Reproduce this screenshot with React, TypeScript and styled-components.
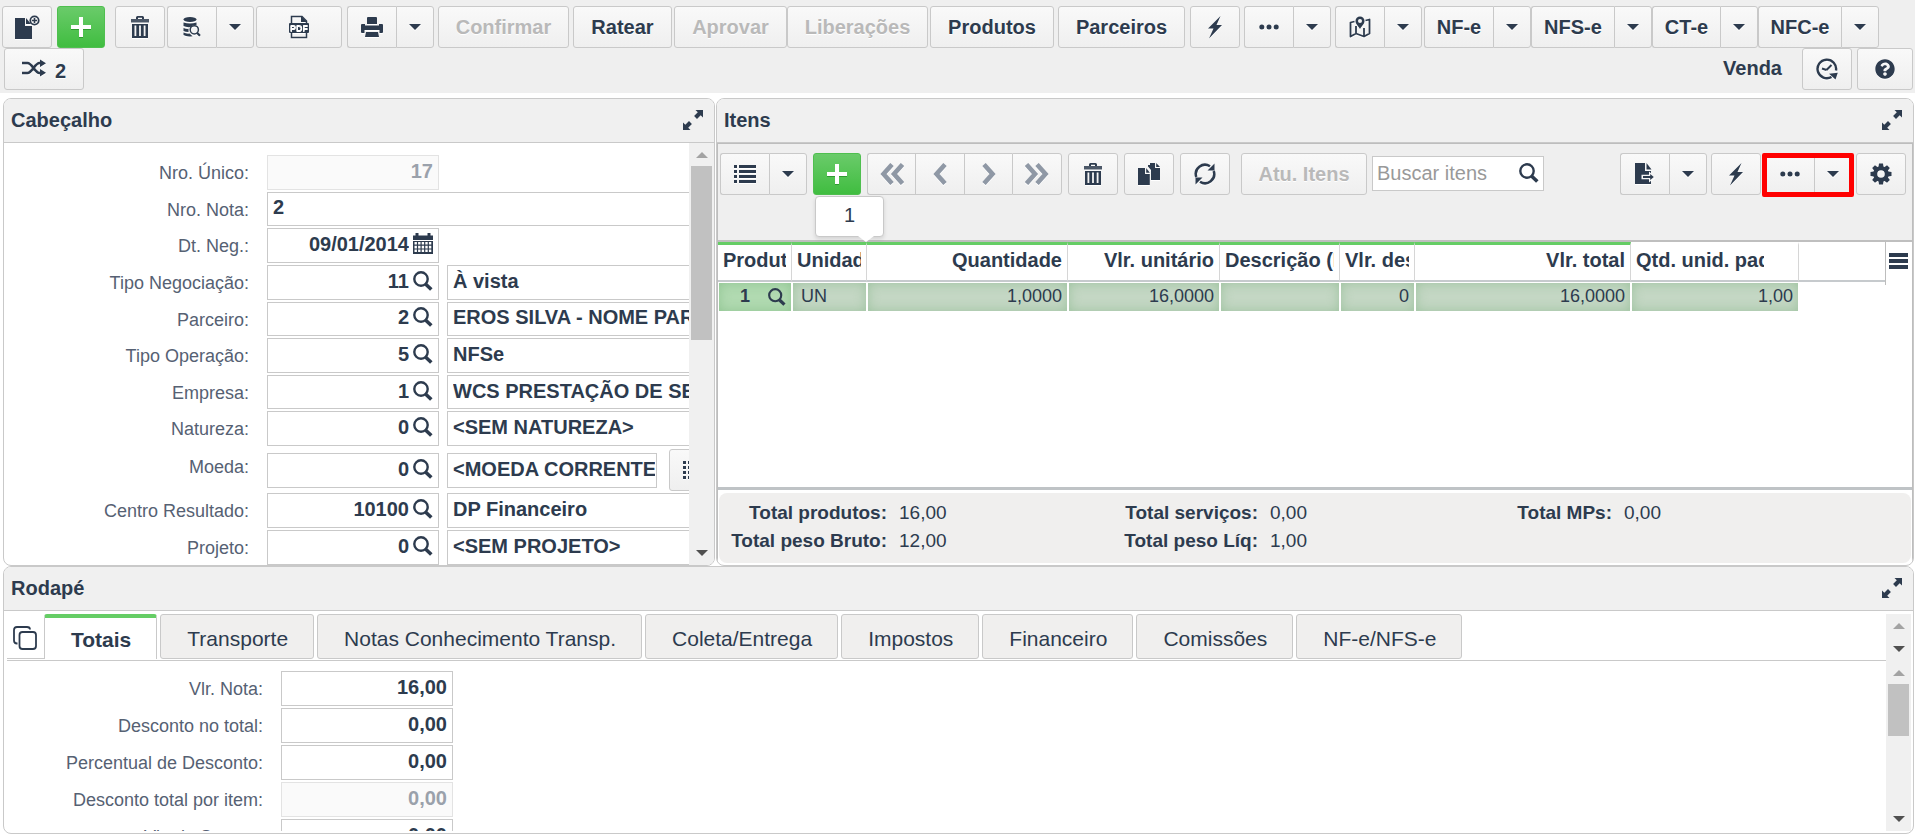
import React from "react";
import styled, { createGlobalStyle, css } from "styled-components";
import { FaQuestionCircle } from "react-icons/fa";

const ink = "#2d3b4e";
const line = "#c9c9c9";
const green = "#65cd65";
const chrome = "#efefef";

const GlobalStyle = createGlobalStyle`
  *, *::before, *::after { box-sizing: border-box; }
  body {
    margin: 0;
    background: #fff;
    color: ${ink};
    font-family: "Liberation Sans", Arial, sans-serif;
    font-size: 20px;
  }
  button, input { font-family: inherit; color: inherit; }
  svg { display: block; flex: none; }
`;

/* ---------- icons ---------- */

type SvgProps = { w: number; h: number; children: React.ReactNode };
const Svg = ({ w, h, children }: SvgProps) => (
  <svg width={w} height={h} viewBox={`0 0 ${w} ${h}`} fill="currentColor" aria-hidden="true">
    {children}
  </svg>
);

const NewDocIcon = () => (
  <Svg w={26} h={26}>
    <path d="M1 4h10v8h7v13H1z" />
    <path d="M12 4l5 6h-5z" />
    <circle cx="20.500" cy="6.500" r="4.200" fill="none" stroke="currentColor" strokeWidth="1.800" />
    <path d="M19.700 4h1.600v1.700H23v1.600h-1.700V9h-1.600V7.300H18V5.700h1.700z" />
  </Svg>
);
const PlusIcon = () => (
  <Svg w={20} h={22}>
    <path d="M8 1h4v8h8v4h-8v8H8v-8H0V9h8z" />
  </Svg>
);
const TrashIcon = () => (
  <Svg w={18} h={24}>
    <path d="M5 4V2.500Q5 1 6.500 1h5Q13 1 13 2.500V4h-2V2.800H7V4z" />
    <path d="M0 4h18v3.500H0z" opacity=".85" />
    <path fillRule="evenodd" d="M1 9h16v14H1zM3.500 10.500v10.500h1.800V10.500zM8.100 10.500v10.500h1.800V10.500zM12.700 10.500v10.500h1.800V10.500z" />
  </Svg>
);
const DbSearchIcon = () => (
  <Svg w={18} h={20}>
    <ellipse cx="7" cy="2.500" rx="6.500" ry="2.500" />
    <path d="M.500 5.500q6.500 2 13 0v2.500h-3l-3 2q-4 .5-7-1z" />
    <path d="M.500 11q3 1.200 5 .8v3.200q-3 0-5-1z" />
    <path d="M.500 15.500q3 1.500 6 1l3 2.700q-6 .8-9-1.200z" />
    <circle cx="11.300" cy="12.800" r="4.100" fill="none" stroke="currentColor" strokeWidth="1.500" />
    <path d="M14 15.800l3 3" stroke="currentColor" strokeWidth="2.200" />
  </Svg>
);
const PdfIcon = () => (
  <Svg w={20} h={24}>
    <path d="M2.500 8V1.500H13L17.500 6v2M2.500 17v5.500h15V17" fill="none" stroke="currentColor" strokeWidth="1.500" />
    <path d="M12 1l6 6h-6z" />
    <rect x="0" y="8" width="20" height="10" rx="1" />
    <text x="10" y="16" fontSize="9" fontWeight="700" fill="#fff" textAnchor="middle">PDF</text>
  </Svg>
);
const PrinterIcon = () => (
  <Svg w={22} h={22}>
    <path d="M6 8V2q0-1 1-1h8q1 0 1 1v6z" />
    <path d="M0 9q0-1 1-1h3v1.500h14V8h3q1 0 1 1v7q0 1-1 1h-2.500v-3h-15v3H1q-1 0-1-1z" />
    <path d="M5 16h12l1 5H4z" />
  </Svg>
);
const BoltIcon = () => (
  <Svg w={16} h={24}>
    <path d="M13.500 1L1 13.500h5.500L2 23.500 15 10H9.500z" />
  </Svg>
);
const DotsIcon = () => (
  <Svg w={20} h={6}>
    <circle cx="2.800" cy="3" r="2.500" />
    <circle cx="10" cy="3" r="2.500" />
    <circle cx="17.200" cy="3" r="2.500" />
  </Svg>
);
const MapIcon = () => (
  <Svg w={22} h={22}>
    <path
      d="M5.500 5.500L1.500 6.500V20.500L7 17.500L15 20.500L20.500 17.500V3.500L16.500 4.500M7 17.500V10M15 20.500V12"
      fill="none"
      stroke="currentColor"
      strokeWidth="1.800"
      strokeLinejoin="round"
    />
    <path fillRule="evenodd" d="M11 0.500a4.500 4.500 0 0 1 4.500 4.500c0 3-2.500 4.500-4.500 8-2-3.500-4.500-5-4.500-8A4.500 4.500 0 0 1 11 .500zM11 3a2 2 0 1 0 0 4 2 2 0 0 0 0-4z" />
  </Svg>
);
const ShuffleIcon = () => (
  <Svg w={24} h={18}>
    <path d="M0 4h5.500C10 4 13 14 17.500 14H19M0 14h5.500C10 14 13 4 17.500 4H19" fill="none" stroke="currentColor" strokeWidth="2.600" />
    <path d="M18 .500L24 4.200 18 8zM18 10l6 3.800-6 3.700z" />
  </Svg>
);
const ClockIcon = () => (
  <Svg w={22} h={22}>
    <path d="M20 12.500A9.300 9.300 0 1 0 15.500 19" fill="none" stroke="currentColor" strokeWidth="2.400" />
    <path d="M13 15.800L21.800 14.800L19.500 21.500z" />
    <path d="M15.500 7L10.500 12M6 10.500l4.500 1.500" stroke="currentColor" strokeWidth="2" />
  </Svg>
);
const ExpandIcon = () => (
  <Svg w={20} h={20}>
    <path d="M11 0.500h8.500V9L16.700 6.200 13 9.900 10.100 7 13.800 3.300z" transform="translate(1 -1)" />
    <path d="M9 19.500H.500V11L3.300 13.800 7 10.100 9.900 13 6.200 16.700z" transform="translate(-1 1)" />
  </Svg>
);
const ListIcon = () => (
  <Svg w={22} h={20}>
    {[1, 6, 11, 16].map((y) => (
      <path key={y} d={`M0 ${y}h3v3H0zM5 ${y}h17v3H5z`} />
    ))}
  </Svg>
);
const ChevronIcon = ({ right, double }: { right?: boolean; double?: boolean }) => (
  <Svg w={double ? 24 : 14} h={22}>
    <g
      fill="none"
      stroke="#8f98a5"
      strokeWidth="4.600"
      transform={right ? `matrix(-1 0 0 1 ${double ? 24 : 14} 0)` : undefined}
    >
      <path d="M12 1.500L3.500 11l8.500 9.500" />
      {double && <path d="M22.500 1.500L14 11l8.500 9.500" />}
    </g>
  </Svg>
);
const CopyIcon = () => (
  <Svg w={22} h={24}>
    <path d="M12 1h5v5h5v12h-9V8l-3-3.500V3h2z" />
    <path d="M18.200 1l3.800 4h-3.800z" />
    <path d="M0 6h7v6h4.800v11H0z" />
    <path d="M8.200 6l3.600 4.800H8.200z" />
  </Svg>
);
const RefreshIcon = () => (
  <Svg w={22} h={24}>
    <path d="M2.300 15A9.200 9.200 0 0 1 16 4.300M19.700 9A9.200 9.200 0 0 1 6 19.700" fill="none" stroke="currentColor" strokeWidth="2.500" />
    <path d="M20.500 1.500V8.500H13.500zM1.500 22.500V15.500H8.500z" />
  </Svg>
);
const ExportIcon = () => (
  <Svg w={22} h={22}>
    <path d="M1 0h10v8h6v13H1z" />
    <path d="M12.500 0L17.500 6.500h-5z" />
    <path d="M7.500 11.700h7.500V8.500l6.500 5.500-6.500 5.500v-3.200H7.500z" fill="#f5f5f5" />
    <path d="M9 13h7.200v-2l3.600 3-3.600 3v-2H9z" />
  </Svg>
);
const GearIcon = () => (
  <Svg w={22} h={22}>
    {[0, 45, 90, 135].map((a) => (
      <path key={a} d="M9 .500h4l.700 5H8.300zM9 21.500h4l.700-5H8.300z" transform={`rotate(${a} 11 11)`} />
    ))}
    <circle cx="11" cy="11" r="5.800" fill="none" stroke="currentColor" strokeWidth="4" />
  </Svg>
);
const CalendarIcon = () => (
  <Svg w={20} h={22}>
    <path d="M2.500 0h3v2.500h9V0h3v2.500H20V7H0V2.500h2.500z" />
    <path fillRule="evenodd" d="M0 8h20v13H0zM1.500 9v2.600h2.400V9zM5.100 9v2.600h2.400V9zM8.700 9v2.600h2.400V9zM12.300 9v2.600h2.400V9zM15.900 9v2.600h2.400V9zM1.500 12.800v2.600h2.400v-2.600zM5.100 12.800v2.600h2.400v-2.600zM8.700 12.800v2.600h2.400v-2.600zM12.300 12.800v2.600h2.400v-2.600zM15.900 12.800v2.600h2.400v-2.600zM1.500 16.600v2.400h2.400v-2.400zM5.100 16.600v2.400h2.400v-2.400zM8.700 16.600v2.400h2.400v-2.400zM12.300 16.600v2.400h2.400v-2.400zM15.900 16.600v2.400h2.400v-2.400z" />
  </Svg>
);
const SearchIcon = ({ size = 20 }: { size?: number }) => (
  <svg width={size} height={size} viewBox="0 0 20 20" fill="none" stroke="currentColor" aria-hidden="true">
    <circle cx="8" cy="8" r="6.700" strokeWidth="2.400" />
    <path d="M12.800 13.300l5.500 5.200" strokeWidth="3.600" />
  </svg>
);
const MenuIcon = () => (
  <Svg w={19} h={16}>
    <path d="M0 0h19v4H0zM0 6h19v4H0zM0 12h19v4H0z" />
  </Svg>
);
const TabsIcon = () => (
  <Svg w={24} h={24}>
    <g fill="none" stroke="currentColor" strokeWidth="1.800">
      <path d="M4.500 17.500H4Q1 17.500 1 14.500V4Q1 1 4 1h10q3 0 3 2.500" />
      <rect x="6.500" y="6" width="16.500" height="17" rx="3" />
    </g>
  </Svg>
);
const CaretIcon = () => (
  <Svg w={12} h={6}>
    <path d="M0 0h12L6 6z" />
  </Svg>
);

/* ---------- buttons ---------- */

const face = css`
  height: 42px;
  border: 1px solid ${line};
  background: linear-gradient(#f9f9f9, #efefef);
  display: inline-flex;
  align-items: center;
  justify-content: center;
  padding: 0;
  flex: none;
  svg { filter: drop-shadow(0 1px 0 #fff); }
`;

const Button = styled.button<{ $w?: number; $gap?: number }>`
  ${face}
  width: ${(p) => p.$w ?? 50}px;
  margin-left: ${(p) => p.$gap ?? 0}px;
  border-radius: 3px;
  font-size: 20px;
  font-weight: 700;
  line-height: 36px;
  text-shadow: 0 1px 0 #fff;
  &:disabled { color: #b9b9b9; }
`;

const AddButton = styled(Button)`
  border-color: #4fbf4f;
  background: linear-gradient(#6acb6a, #40bd40);
  color: #fff;
  svg { filter: drop-shadow(0 1px 0 #2f9a2f); }
`;

const CountButton = styled(Button)`
  align-items: flex-start;
  gap: 9px;
  padding-top: 4px;
  svg { margin-top: 6px; }
`;

const Split = styled.div<{ $gap?: number }>`
  position: relative;
  display: flex;
  flex: none;
  margin-left: ${(p) => p.$gap ?? 0}px;
  & > button { margin-left: 0; }
  & > button:not(:last-of-type) { border-radius: 3px 0 0 3px; border-right: 0; }
  & > button:last-of-type { border-radius: 0 3px 3px 0; }
  & > button:not(:first-of-type):not(:last-of-type) { border-radius: 0; }
`;

type SplitButtonProps = { label: string; w?: number; gap?: number; children: React.ReactNode; mark?: React.ReactNode };
const SplitButton = ({ label, w = 49, gap, children, mark }: SplitButtonProps) => (
  <Split $gap={gap}>
    <Button $w={w} aria-label={label}>{children}</Button>
    <Button $w={38} aria-label={`${label}: opções`}><CaretIcon /></Button>
    {mark}
  </Split>
);

const Highlight = styled.span`
  position: absolute;
  inset: 0 -2px -2px -3px;
  border: 5px solid #f00;
  border-radius: 2px;
  pointer-events: none;
`;

/* ---------- page frame ---------- */

const Page = styled.div`
  height: 100vh;
  display: flex;
  flex-direction: column;
`;

const TopBar = styled.header`
  background: ${chrome};
  padding: 6px 2px 3px;
`;

const BarRow = styled.div`
  display: flex;
  align-items: center;
`;

const Push = styled.span`
  margin-left: auto;
`;

const Operation = styled.strong`
  margin-left: auto;
  padding-bottom: 2px;
`;

const Panels = styled.main`
  flex: 1;
  min-height: 0;
  display: flex;
  flex-direction: column;
  padding: 5px 1px 1px 3px;
`;

const UpperRow = styled.div`
  display: grid;
  grid-template-columns: 712fr 1198fr;
  column-gap: 1px;
`;

const Panel = styled.section<{ $fill?: boolean }>`
  border: 1px solid ${line};
  border-radius: 8px;
  overflow: hidden;
  display: flex;
  flex-direction: column;
  min-width: 0;
  min-height: 0;
  ${(p) => p.$fill && "flex: 1;"}
`;

const PanelHead = styled.div`
  flex: none;
  height: 44px;
  background: #f0f0f0;
  border-bottom: 1px solid ${line};
  display: flex;
  align-items: center;
  justify-content: space-between;
  padding: 0 11px 2px 7px;
`;

const PanelTitle = styled.h2`
  margin: 0;
  font-size: 20px;
  line-height: 24px;
`;

const BareButton = styled.button`
  border: 0;
  background: none;
  padding: 0;
  display: flex;
  flex: none;
`;

const Head = ({ title }: { title: string }) => (
  <PanelHead>
    <PanelTitle>{title}</PanelTitle>
    <BareButton aria-label={`Expandir ${title}`}><ExpandIcon /></BareButton>
  </PanelHead>
);

/* ---------- scroll bars ---------- */

const Track = styled.div<{ $h?: number }>`
  flex: none;
  width: 25px;
  ${(p) => p.$h && `height: ${p.$h}px;`}
  padding-bottom: 1px;
  background: #f0f0f0;
  display: flex;
  flex-direction: column;
  align-items: center;
  justify-content: space-between;
`;

const ArrowCell = styled.div<{ $dim?: boolean; $down?: boolean }>`
  height: 23px;
  width: 100%;
  display: flex;
  align-items: center;
  justify-content: center;
  color: ${(p) => (p.$dim ? "#a3a3a3" : "#505050")};
  svg { transform: ${(p) => (p.$down ? "none" : "scaleY(-1)")}; }
`;

const Thumb = styled.div<{ $h: number }>`
  width: 21px;
  height: ${(p) => p.$h}px;
  margin-bottom: auto;
  background: #c1c1c1;
`;

const ScrollBar = ({ thumb, height }: { thumb?: number; height?: number }) => (
  <Track $h={height} aria-hidden="true">
    <ArrowCell $dim><CaretIcon /></ArrowCell>
    {thumb && <Thumb $h={thumb} />}
    <ArrowCell $down><CaretIcon /></ArrowCell>
  </Track>
);

/* ---------- form fields ---------- */

const HeaderBody = styled.div`
  display: flex;
`;

const FormArea = styled.div`
  flex: 1;
  min-width: 0;
  overflow: hidden;
  padding: 12px 0 0;
`;

const EvenRows = styled.div`
  height: 291px;
  display: grid;
  grid-auto-rows: 1fr;
  row-gap: 2px;
`;

const LowerRows = styled.div`
  display: grid;
  grid-auto-rows: minmax(35px, auto);
  row-gap: 2px;
  margin-top: 3px;
`;

const FieldRow = styled.div<{ $labelWidth: number }>`
  display: grid;
  grid-template-columns: ${(p) => p.$labelWidth}px max-content;
  column-gap: 18px;
  align-items: center;
`;

const FieldLabel = styled.label`
  align-self: start;
  text-align: right;
  font-size: 18px;
  line-height: 37px;
  height: 34px;
  color: #566173;
`;

const Controls = styled.div`
  display: flex;
  align-items: center;
  gap: 8px;
  height: 100%;
`;

const Box = styled.div<{ $w: number; $off?: boolean }>`
  width: ${(p) => p.$w}px;
  height: 100%;
  min-height: 35px;
  max-height: 35px;
  flex: none;
  display: flex;
  align-items: center;
  border: 1px solid ${(p) => (p.$off ? "#e3e3e3" : line)};
  background: ${(p) => (p.$off ? "#fafafa" : "#fff")};
  color: ${(p) => (p.$off ? "#9aa1ab" : ink)};
  padding: 0 5px 3px;
`;

const FormBox = styled(Box)`
  min-height: 0;
`;

const NameBox = styled(FormBox)`
  padding-right: 1px;
`;

const Entry = styled.input<{ $left?: boolean }>`
  flex: 1;
  min-width: 0;
  width: 100%;
  border: 0;
  padding: 0;
  background: none;
  outline: 0;
  color: inherit;
  font-size: 20px;
  font-weight: 700;
  line-height: 24px;
  text-align: ${(p) => (p.$left ? "left" : "right")};
`;

const Lookup = styled(BareButton)`
  margin-left: 4px;
  color: ${ink};
`;

type Field = { id: string; label: string; value: string; name?: string; date?: boolean; off?: boolean; wide?: boolean; narrow?: boolean };

const firstFields: Field[] = [
  { id: "nro-unico", label: "Nro. Único:", value: "17", off: true },
  { id: "nro-nota", label: "Nro. Nota:", value: "2", wide: true },
  { id: "dt-neg", label: "Dt. Neg.:", value: "09/01/2014", date: true },
  { id: "tipo-negociacao", label: "Tipo Negociação:", value: "11", name: "À vista" },
  { id: "parceiro", label: "Parceiro:", value: "2", name: "EROS SILVA - NOME PARCEIRO" },
  { id: "tipo-operacao", label: "Tipo Operação:", value: "5", name: "NFSe" },
  { id: "empresa", label: "Empresa:", value: "1", name: "WCS PRESTAÇÃO DE SERVIÇOS" },
  { id: "natureza", label: "Natureza:", value: "0", name: "<SEM NATUREZA>" },
];

const lastFields: Field[] = [
  { id: "moeda", label: "Moeda:", value: "0", name: "<MOEDA CORRENTE>", narrow: true },
  { id: "centro", label: "Centro Resultado:", value: "10100", name: "DP Financeiro" },
  { id: "projeto", label: "Projeto:", value: "0", name: "<SEM PROJETO>" },
];

const FormField = ({ f }: { f: Field }) => (
  <FieldRow $labelWidth={245}>
    <FieldLabel htmlFor={f.id}>{f.label}</FieldLabel>
    <Controls>
      <FormBox $w={f.wide ? 460 : 172} $off={f.off}>
        <Entry id={f.id} defaultValue={f.value} disabled={f.off} $left={f.wide} />
        {f.date && <Lookup aria-label="Abrir calendário"><CalendarIcon /></Lookup>}
        {f.name && <Lookup aria-label={`Pesquisar ${f.label}`}><SearchIcon /></Lookup>}
      </FormBox>
      {f.name && (
        <NameBox $w={f.narrow ? 210 : 300}>
          <Entry $left defaultValue={f.name} aria-label={`Descrição ${f.label}`} />
        </NameBox>
      )}
      {f.narrow && <Button $gap={4} aria-label="Cotações"><ListIcon /></Button>}
    </Controls>
  </FieldRow>
);

/* ---------- items ---------- */

const ItemsBody = styled.div`
  flex: 1;
  display: flex;
  flex-direction: column;
  border: 1px solid #bdbdbd;
  border-bottom: 0;
  min-width: 0;
`;

const ItemsBar = styled.div`
  position: relative;
  flex: none;
  display: flex;
  align-items: flex-start;
  height: 98px;
  padding: 9px 6px 0 2px;
  background: ${chrome};
  border-bottom: 2px solid #bfbfbf;
`;

const SearchBox = styled(Box)`
  margin: 3px 0 0 5px;
  padding: 0 4px 2px;
`;

const SearchEntry = styled(Entry)`
  font-weight: 400;
  &::placeholder { color: #999; opacity: 1; }
`;

const Tip = styled.output`
  position: absolute;
  left: 97px;
  top: 52px;
  width: 69px;
  height: 41px;
  border: 1px solid ${line};
  border-radius: 4px;
  background: #fff;
  box-shadow: 0 2px 4px rgba(0, 0, 0, 0.12);
  text-align: center;
  line-height: 37px;
  &::after {
    content: "";
    position: absolute;
    left: 42px;
    top: 39px;
    border: 8px solid transparent;
    border-top: 6px solid #fff;
    border-bottom: 0;
  }
`;

const GridFrame = styled.div`
  flex: 1;
  display: flex;
  align-items: flex-start;
  background: #fff;
`;

const Table = styled.table`
  flex: 1;
  width: 100%;
  min-width: 0;
  table-layout: fixed;
  border-collapse: separate;
  border-spacing: 0;
`;

const Th = styled.th<{ $right?: boolean; $mark?: boolean }>`
  height: 40px;
  padding: 0 5px 6px;
  border-top: 3px solid ${(p) => (p.$mark ? green : "transparent")};
  border-right: 1px solid #d6d6d6;
  border-bottom: 2px solid #c6cacd;
  font-size: 20px;
  line-height: 24px;
  text-align: ${(p) => (p.$right ? "right" : "left")};
  &:last-child { border-right: 0; }
`;

const Clip = styled.div`
  overflow: hidden;
  white-space: nowrap;
`;

const Td = styled.td<{ $right?: boolean; $lead?: boolean }>`
  height: 29px;
  padding: 0 5px 1px 8px;
  border: 1px solid #fff;
  border-bottom: 0;
  font-size: 18px;
  text-align: ${(p) => (p.$right ? "right" : "left")};
  background: ${(p) => (p.$lead ? "#b1dab1" : "#c4d7c4")};
  background-clip: padding-box;
  box-shadow: inset 0 0 12px rgba(70, 150, 75, 0.3);
  &:empty:last-child { background: none; box-shadow: none; }
`;

const LeadCell = styled.div`
  display: flex;
  align-items: center;
  justify-content: flex-end;
  gap: 18px;
  font-weight: 700;
`;

const GridMenu = styled(BareButton)`
  width: 27px;
  height: 43px;
  border-left: 1px solid #bdbdbd;
  padding: 11px 0 0 3px;
`;

const columns = [
  { title: "Produto", w: 74, mark: true, value: "1" },
  { title: "Unidade", w: 75, mark: true, value: "UN" },
  { title: "Quantidade", w: 201, right: true, mark: true, value: "1,0000" },
  { title: "Vlr. unitário", w: 152, right: true, mark: true, value: "16,0000" },
  { title: "Descrição (Item)", w: 120, mark: true, value: "" },
  { title: "Vlr. desconto", w: 75, mark: true, value: "0", rightValue: true },
  { title: "Vlr. total", w: 216, right: true, mark: true, value: "16,0000" },
  { title: "Qtd. unid. padrão", w: 168, value: "1,00", rightValue: true, gutter: true },
];

const GutterClip = styled(Clip)`
  margin-right: 29px;
`;

const Totals = styled.dl`
  flex: none;
  margin: 3px 1px 2px;
  height: 70px;
  border-radius: 8px;
  background: #f0efee;
  display: grid;
  grid-template-columns: 168px 179px 192px 179px 175px 1fr;
  grid-auto-rows: 28px;
  column-gap: 0;
  padding-top: 6px;
  font-size: 19px;
  line-height: 28px;
`;

const TotalLabel = styled.dt`
  text-align: right;
  font-weight: 700;
`;

const TotalValue = styled.dd`
  margin: 0;
  padding-left: 12px;
`;

const totals = [
  ["Total produtos:", "16,00"],
  ["Total serviços:", "0,00"],
  ["Total MPs:", "0,00"],
  ["Total peso Bruto:", "12,00"],
  ["Total peso Líq:", "1,00"],
];

const GridRule = styled.div`
  flex: none;
  height: 3px;
  background: #bfc3c6;
`;

/* ---------- footer panel ---------- */

const FooterBody = styled.div`
  flex: 1;
  min-height: 0;
  display: flex;
  flex-direction: column;
  padding: 3px 2px 2px 3px;
`;

const TabStrip = styled.div`
  flex: none;
  display: flex;
`;

const TabList = styled.div`
  flex: 1;
  display: flex;
  gap: 3px;
  height: 47px;
  border-bottom: 1px solid ${line};
`;

const TabCorner = styled.div`
  width: 38px;
  height: 45px;
  margin-right: -4px;
  padding: 12px 0 0 6px;
  border-bottom: 1px solid ${line};
`;

const Tab = styled.button<{ $active?: boolean }>`
  height: 45px;
  flex: none;
  padding: 4px 25px 0 26px;
  border: 1px solid ${line};
  border-radius: 3px;
  background: #f0efee;
  font-size: 21px;
  line-height: 38px;
  ${(p) =>
    p.$active &&
    css`
      background: #fff;
      border-top: 4px solid ${green};
      border-bottom: 0;
      border-radius: 3px 3px 0 0;
      font-weight: 700;
      padding-top: 2px;
    `}
`;

const tabs = ["Totais", "Transporte", "Notas Conhecimento Transp.", "Coleta/Entrega", "Impostos", "Financeiro", "Comissões", "NF-e/NFS-e"];

const TabBody = styled.div`
  flex: 1;
  min-height: 0;
  display: flex;
`;

const TotalsForm = styled.div`
  flex: 1;
  overflow: hidden;
  display: flex;
  flex-direction: column;
  gap: 2px;
  padding-top: 10px;
`;

const footerFields = [
  { id: "vlr-nota", label: "Vlr. Nota:", value: "16,00" },
  { id: "desc-total", label: "Desconto no total:", value: "0,00" },
  { id: "perc-desc", label: "Percentual de Desconto:", value: "0,00" },
  { id: "desc-item", label: "Desconto total por item:", value: "0,00", off: true },
  { id: "vlr-seguro", label: "Vlr. do Seguro:", value: "0,00" },
];

export default function App() {
  return (
    <Page>
      <GlobalStyle />
      <TopBar>
        <BarRow>
          <Button aria-label="Novo documento"><NewDocIcon /></Button>
          <AddButton $w={48} $gap={5} aria-label="Adicionar"><PlusIcon /></AddButton>
          <Button $gap={10} aria-label="Excluir"><TrashIcon /></Button>
          <SplitButton label="Consultar" gap={2}><DbSearchIcon /></SplitButton>
          <Button $w={86} $gap={2} aria-label="Gerar documento"><PdfIcon /></Button>
          <SplitButton label="Imprimir" gap={5}><PrinterIcon /></SplitButton>
          <Button $w={131} $gap={4} disabled>Confirmar</Button>
          <Button $w={99} $gap={4}>Ratear</Button>
          <Button $w={113} $gap={2} disabled>Aprovar</Button>
          <Button $w={141} disabled>Liberações</Button>
          <Button $w={124} $gap={2}>Produtos</Button>
          <Button $w={127} $gap={4}>Parceiros</Button>
          <Button $gap={5} aria-label="Ações rápidas"><BoltIcon /></Button>
          <SplitButton label="Mais" gap={4}><DotsIcon /></SplitButton>
          <SplitButton label="Mapa" gap={4}><MapIcon /></SplitButton>
          <SplitButton label="NF-e" gap={2} w={69}>NF-e</SplitButton>
          <SplitButton label="NFS-e" w={83}>NFS-e</SplitButton>
          <SplitButton label="CT-e" w={68}>CT-e</SplitButton>
          <SplitButton label="NFC-e" w={83}>NFC-e</SplitButton>
        </BarRow>
        <BarRow>
          <CountButton $w={80} $gap={2}>
            <ShuffleIcon />
            <span>2</span>
          </CountButton>
          <Operation>Venda</Operation>
          <Button $gap={20} aria-label="Histórico"><ClockIcon /></Button>
          <Button $w={56} $gap={5} aria-label="Ajuda"><FaQuestionCircle size={20} /></Button>
        </BarRow>
      </TopBar>

      <Panels>
        <UpperRow>
          <Panel>
            <Head title="Cabeçalho" />
            <HeaderBody>
              <FormArea>
                <EvenRows>
                  {firstFields.map((f) => <FormField key={f.id} f={f} />)}
                </EvenRows>
                <LowerRows>
                  {lastFields.map((f) => <FormField key={f.id} f={f} />)}
                </LowerRows>
              </FormArea>
              <ScrollBar thumb={174} />
            </HeaderBody>
          </Panel>

          <Panel>
            <Head title="Itens" />
            <ItemsBody>
              <ItemsBar>
                <SplitButton label="Modo de exibição"><ListIcon /></SplitButton>
                <AddButton $w={48} $gap={6} aria-label="Adicionar item"><PlusIcon /></AddButton>
                <Split $gap={6}>
                  <Button $w={48} aria-label="Primeiro"><ChevronIcon double /></Button>
                  <Button $w={49} aria-label="Anterior"><ChevronIcon /></Button>
                  <Button $w={48} aria-label="Próximo"><ChevronIcon right /></Button>
                  <Button aria-label="Último"><ChevronIcon right double /></Button>
                </Split>
                <Button $gap={6} aria-label="Excluir item"><TrashIcon /></Button>
                <Button $gap={6} aria-label="Duplicar item"><CopyIcon /></Button>
                <Button $gap={6} aria-label="Atualizar"><RefreshIcon /></Button>
                <Button $w={126} $gap={11} disabled>Atu. Itens</Button>
                <SearchBox $w={172}>
                  <SearchEntry $left placeholder="Buscar itens" aria-label="Buscar itens" />
                  <Lookup aria-label="Buscar"><SearchIcon /></Lookup>
                </SearchBox>
                <Push />
                <SplitButton label="Exportar"><ExportIcon /></SplitButton>
                <Button $gap={4} aria-label="Ações rápidas"><BoltIcon /></Button>
                <SplitButton label="Mais opções" gap={4} mark={<Highlight />}><DotsIcon /></SplitButton>
                <Button $gap={4} aria-label="Configurações"><GearIcon /></Button>
                <Tip>1</Tip>
              </ItemsBar>
              <GridFrame>
                <Table>
                  <colgroup>
                    {columns.map((c) => <col key={c.title} width={c.w} />)}
                    <col />
                  </colgroup>
                  <thead>
                    <tr>
                      {columns.map((c) => (
                        <Th key={c.title} $right={c.right} $mark={c.mark}>
                          {c.gutter ? <GutterClip>{c.title}</GutterClip> : <Clip>{c.title}</Clip>}
                        </Th>
                      ))}
                      <Th />
                    </tr>
                  </thead>
                  <tbody>
                    <tr>
                      {columns.map((c, i) => (
                        <Td key={c.title} $lead={i === 0} $right={c.right || c.rightValue}>
                          {i === 0 ? (
                            <LeadCell>
                              {c.value}
                              <BareButton aria-label="Pesquisar produto"><SearchIcon size={18} /></BareButton>
                            </LeadCell>
                          ) : (
                            c.value
                          )}
                        </Td>
                      ))}
                      <Td />
                    </tr>
                  </tbody>
                </Table>
                <GridMenu aria-label="Colunas"><MenuIcon /></GridMenu>
              </GridFrame>
              <GridRule />
              <Totals>
                {totals.map(([label, value]) => (
                  <React.Fragment key={label}>
                    <TotalLabel>{label}</TotalLabel>
                    <TotalValue>{value}</TotalValue>
                  </React.Fragment>
                ))}
              </Totals>
            </ItemsBody>
          </Panel>
        </UpperRow>

        <Panel $fill>
          <Head title="Rodapé" />
          <FooterBody>
            <TabStrip>
              <TabList>
                <TabCorner>
                  <BareButton aria-label="Abas"><TabsIcon /></BareButton>
                </TabCorner>
                {tabs.map((t, i) => <Tab key={t} $active={i === 0}>{t}</Tab>)}
              </TabList>
              <ScrollBar height={47} />
            </TabStrip>
            <TabBody>
              <TotalsForm>
                {footerFields.map((f) => (
                  <FieldRow key={f.id} $labelWidth={256}>
                    <FieldLabel htmlFor={f.id}>{f.label}</FieldLabel>
                    <Box $w={172} $off={f.off}>
                      <Entry id={f.id} defaultValue={f.value} disabled={f.off} />
                    </Box>
                  </FieldRow>
                ))}
              </TotalsForm>
              <ScrollBar thumb={52} />
            </TabBody>
          </FooterBody>
        </Panel>
      </Panels>
    </Page>
  );
}
